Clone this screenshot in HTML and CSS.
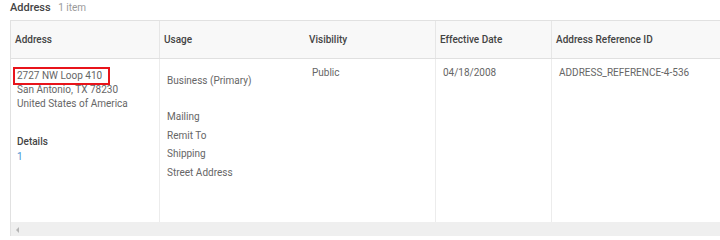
FILE: index.html
```html
<!DOCTYPE html>
<html lang="en">
<head>
    <meta charset="UTF-8">
    <title>Address</title>
    <link rel="stylesheet" href="styles.css">
</head>
<body>
    <div class="title">
        <span class="name">Address</span>
        <span class="count">1 item</span>
    </div>

    <div class="grid">
        <div class="head">
            <div class="th">Address</div>
            <div class="th no-line">Usage</div>
            <div class="th">Visibility</div>
            <div class="th">Effective Date</div>
            <div class="th">Address Reference ID</div>
        </div>
        <div class="row">
            <div class="td address">
                <div class="line"><span class="hl">2727 NW Loop 410</span></div>
                <div class="line">San Antonio, TX 78230</div>
                <div class="line">United States of America</div>
                <div class="label">Details</div>
                <div class="link">1</div>
            </div>
            <div class="td usage">
                <div class="primary">Business (Primary)</div>
                <div class="use">Mailing</div>
                <div class="use">Remit To</div>
                <div class="use">Shipping</div>
                <div class="use">Street Address</div>
            </div>
            <div class="td plain">Public</div>
            <div class="td plain">04/18/2008</div>
            <div class="td plain">ADDRESS_REFERENCE-4-536</div>
        </div>
        <div class="scrollbar">
            <span class="arrow"></span>
        </div>
    </div>
</body>
</html>
```

FILE: styles.css
```css
body {
    margin: 0;
    width: 720px;
    height: 240px;
    overflow: hidden;
    font-family: Roboto, "Liberation Sans", sans-serif;
    font-size: 10px;
    color: #666;
    background: #fff;
}
.title {
    height: 15px;
    padding-left: 10px;
    line-height: 15px;
}
.title .name {
    font-size: 11px;
    font-weight: 500;
    color: #444;
}
.title .count {
    margin-left: 5px;
    font-size: 10px;
    color: #9a9a9a;
}
.grid {
    margin: 5px 0 0 10px;
    width: 740px;
    border: 1px solid #e1e1e1;
    border-bottom: none;
}
.head, .row {
    display: grid;
    grid-template-columns: 149px 145px 131px 116px 1fr;
}
.head {
    height: 37px;
    background: #f8f8f8;
    border-bottom: 1px solid #e0e0e0;
}
.th {
    padding-left: 4px;
    line-height: 37px;
    font-weight: 500;
    color: #444;
    border-right: 1px solid #e6e6e6;
}
.th.no-line {
    border-right: none;
}
.row {
    height: 163px;
}
.td {
    padding: 0 6px;
    border-right: 1px solid #ececec;
}
.td.address {
    padding-top: 10px;
}
.line {
    line-height: 14px;
}
.hl {
    display: inline-block;
    margin-left: -2px;
    padding: 0 6px 0 2px;
    line-height: 14px;
    outline: 2px solid #e8141b;
}
.label {
    margin-top: 23px;
    font-weight: 500;
    color: #444;
    line-height: 15px;
}
.link {
    color: #4a93d3;
    line-height: 15px;
}
.td.usage {
    padding-left: 7px;
    padding-top: 14px;
    border-right: none;
}
.primary {
    line-height: 16px;
    margin-bottom: 19px;
}
.use {
    line-height: 18.7px;
}
.td.plain {
    padding-top: 7px;
    padding-left: 7px;
    line-height: 14px;
}
.scrollbar {
    height: 14px;
    background: #efefef;
    position: relative;
}
.arrow {
    position: absolute;
    left: 5px;
    top: 5px;
    width: 0;
    height: 0;
    border-top: 3px solid transparent;
    border-bottom: 3px solid transparent;
    border-right: 3px solid #b5b5b5;
}
```
